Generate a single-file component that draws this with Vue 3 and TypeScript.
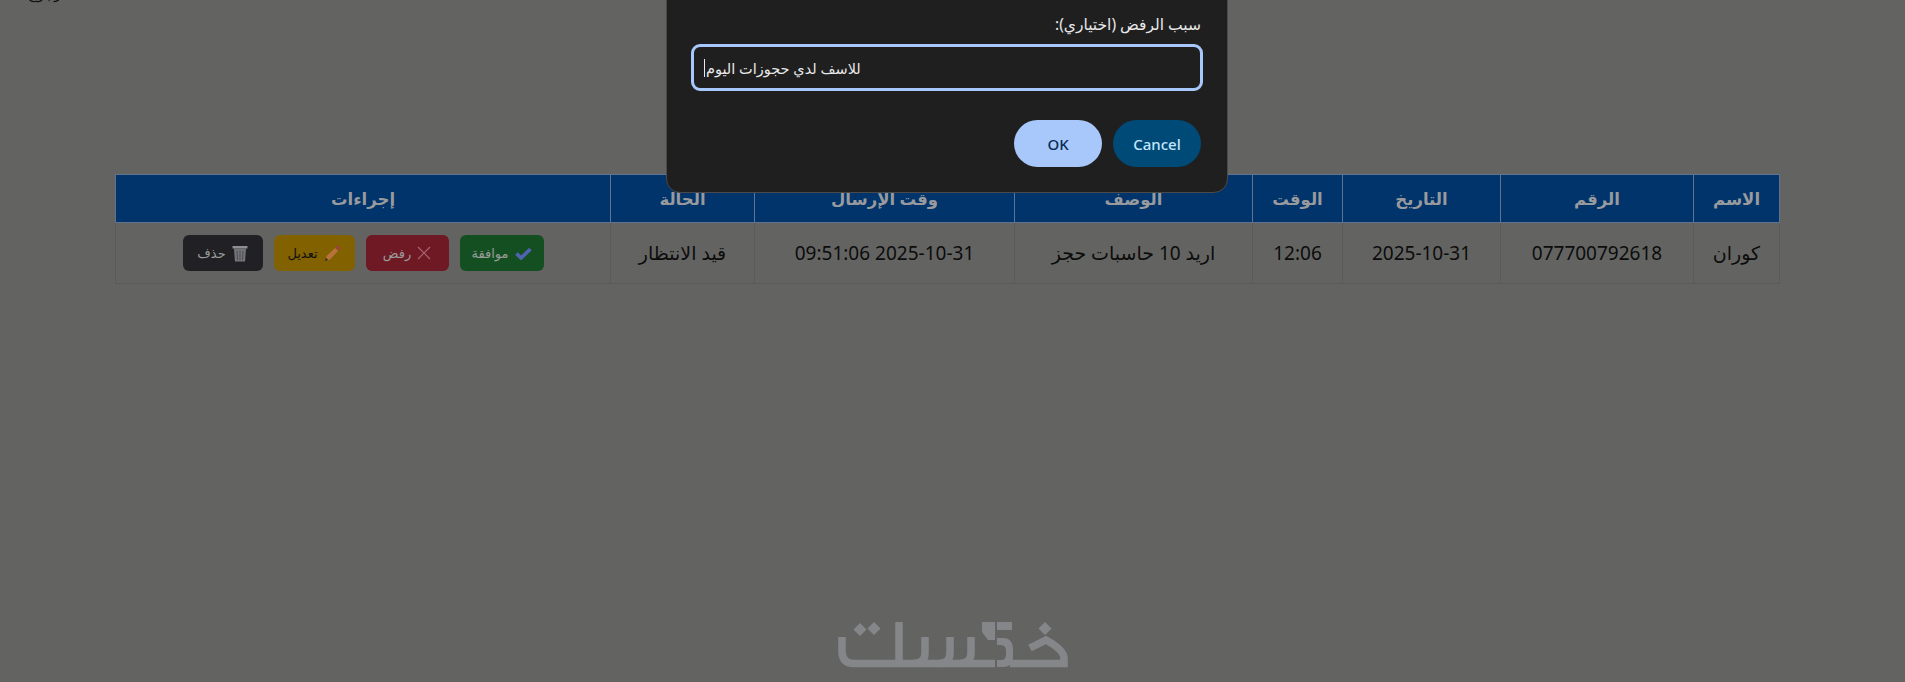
<script setup lang="ts">
const headers = ['الاسم', 'الرقم', 'التاريخ', 'الوقت', 'الوصف', 'وقت الإرسال', 'الحالة', 'إجراءات']
const cells = ['كوران', '077700792618', '2025-10-31', '12:06', 'اريد 10 حاسبات حجز', '2025-10-31 09:51:06', 'قيد الانتظار']
</script>

<template>
  <div class="page" dir="rtl">
    <p class="back"><span>رجوع</span></p>
    <table class="bookings">
      <colgroup>
        <col style="width: 86px" /><col style="width: 193px" /><col style="width: 158px" /><col style="width: 90px" />
        <col style="width: 238px" /><col style="width: 260px" /><col style="width: 144px" /><col />
      </colgroup>
      <thead>
        <tr><th v-for="h in headers" :key="h">{{ h }}</th></tr>
      </thead>
      <tbody>
        <tr>
          <td v-for="c in cells" :key="c">{{ c }}</td>
          <td>
            <div class="actions">
              <button class="act green">
                <svg width="17" height="14" viewBox="0 0 17 14"><path d="M1.5 7.5 L6 12 L15.500 3" fill="none" stroke="#4f63b0" stroke-width="3.6" /></svg>
                موافقة
              </button>
              <button class="act red">
                <svg width="14" height="14" viewBox="0 0 14 14"><path d="M1 1 L13 13 M13 1 L1 13" fill="none" stroke="#a8666e" stroke-width="1.1" /></svg>
                رفض
              </button>
              <button class="act yellow">
                <svg width="17" height="17" viewBox="0 0 17 17"><path d="M1 16 L2.5 11 L11 3 L14 6 L6 14.500 Z" fill="#b8733a" /><path d="M11.500 2.500 L13.500 .8 L16.200 3.500 L14.500 5.500 Z" fill="#a33c4c" /><path d="M1 16 L2 12.800 L4.200 15 Z" fill="#2a2a2a" /></svg>
                تعديل
              </button>
              <button class="act dark">
                <svg width="16" height="17" viewBox="0 0 16 17"><path d="M.5 1 H15.500 V3.500 H.5 Z" fill="#8e9092" /><path d="M2 3.500 H14 L13 16.500 H3 Z" fill="#737578" /><path d="M5 5.500 L5.500 15 M8 5.500 V15 M11 5.500 L10.500 15" stroke="#4a4c50" stroke-width="1" /></svg>
                حذف
              </button>
            </div>
          </td>
        </tr>
      </tbody>
    </table>

    <footer class="logo">
      <svg width="232" height="50" viewBox="0 0 232 50" fill="none" stroke="#85868a" stroke-width="7.5">
        <path d="M4 17 V31 Q4 43.500 16 43.500 H157" />
        <path d="M61 2 V43.500 M87 17 V33 Q87 43.500 76 43.500 M112 17 V33 Q112 43.500 101 43.500 M133 17 V33 Q133 43.500 122 43.500" />
        <path d="M192 28 L208 20 Q226 30 226 38 V43.500 H172" />
        <g fill="#85868a" stroke="none">
          <path d="M22 3 l6.500 6.500 l-6.500 6.500 l-6.500 -6.500 Z M36 2 l6.500 6.500 l-6.500 6.500 l-6.500 -6.500 Z M207 2 l6.500 6.500 l-6.500 6.500 l-6.500 -6.500 Z" />
          <path d="M144 2 H157 V20 H150 L144 12 Z M159 2 H174 V10 H159 Z" />
          <path d="M159 18 H165 Q175 18 175 30 V36 Q175 47 165 47 H159 V40 H163 Q168 40 168 35 V31 Q168 25 163 25 H159 Z" />
        </g>
      </svg>
    </footer>

    <div class="dialog">
      <label class="prompt">سبب الرفض (اختياري):</label>
      <div class="field" dir="ltr"><span class="caret"></span><span dir="rtl">للاسف لدي حجوزات اليوم</span></div>
      <div class="buttons">
        <button class="btn cancel" dir="ltr">Cancel</button>
        <button class="btn ok" dir="ltr">OK</button>
      </div>
    </div>
  </div>
</template>

<style>
html, body { margin: 0; background: #636462; }
</style>

<style scoped>
.page {
  position: relative;
  height: 682px;
  overflow: hidden;
  box-sizing: border-box;
  padding-right: 10px;
  font-family: "Noto Sans", "DejaVu Sans", sans-serif;
  color: #0c0c0c;
  background: #636462;
}
.back {
  margin: -17px 0 171px;
  height: 20px;
  padding-left: 28px;
  text-align: left;
  font-size: 15px;
  line-height: 20px;
  color: #111;
}
.bookings {
  width: 1665px;
  margin: 0 auto;
  border-collapse: collapse;
  table-layout: fixed;
  font-size: 19px;
}
.bookings th, .bookings td {
  border: 1px solid #595a59;
  text-align: center;
  padding: 0;
}
.bookings th {
  height: 47px;
  background: #00346b;
  border-color: #5f7390;
  color: #989a9e;
  font-weight: 700;
  font-size: 16.500px;
}
.bookings td { height: 60px; }
.actions { display: flex; justify-content: center; gap: 11px; }
.act {
  display: flex;
  align-items: center;
  justify-content: center;
  gap: 6px;
  height: 36px;
  padding: 0;
  border: none;
  border-radius: 6px;
  font: inherit;
  font-size: 13px;
  color: #9a9c9a;
}
.green { width: 84px; background: #134f21; }
.red { width: 83px; background: #6f1925; }
.yellow { width: 81px; background: #826100; color: #111; }
.dark { width: 80px; background: #212125; }
.logo {
  position: absolute;
  left: 838px;
  top: 620px;
  line-height: 0;
}
.dialog {
  position: absolute;
  left: 666px;
  top: -40px;
  width: 562px;
  height: 233px;
  box-sizing: border-box;
  padding: 51px 26px 0 24px;
  background: #1f1f1f;
  border: 1px solid #4a4a4a;
  border-radius: 14px;
  color: #e8e8e8;
  font-size: 15.500px;
}
.prompt { display: block; height: 32px; line-height: 24px; }
.field {
  box-sizing: border-box;
  width: 512px;
  height: 47px;
  margin-right: -2px;
  display: flex;
  align-items: center;
  padding: 0 10px;
  border: 3px solid #a8c7fa;
  border-radius: 9px;
  font-size: 14.500px;
}
.caret { width: 1px; height: 18px; background: #e8e8e8; margin-right: 1px; }
.buttons { display: flex; gap: 11px; margin-top: 29px; }
.btn {
  width: 88px;
  height: 47px;
  border: none;
  border-radius: 24px;
  font: inherit;
  font-size: 15px;
  font-weight: 500;
}
.cancel { background: #004a77; color: #c2e7ff; }
.ok { background: #a8c7fa; color: #0a2a55; }
</style>
